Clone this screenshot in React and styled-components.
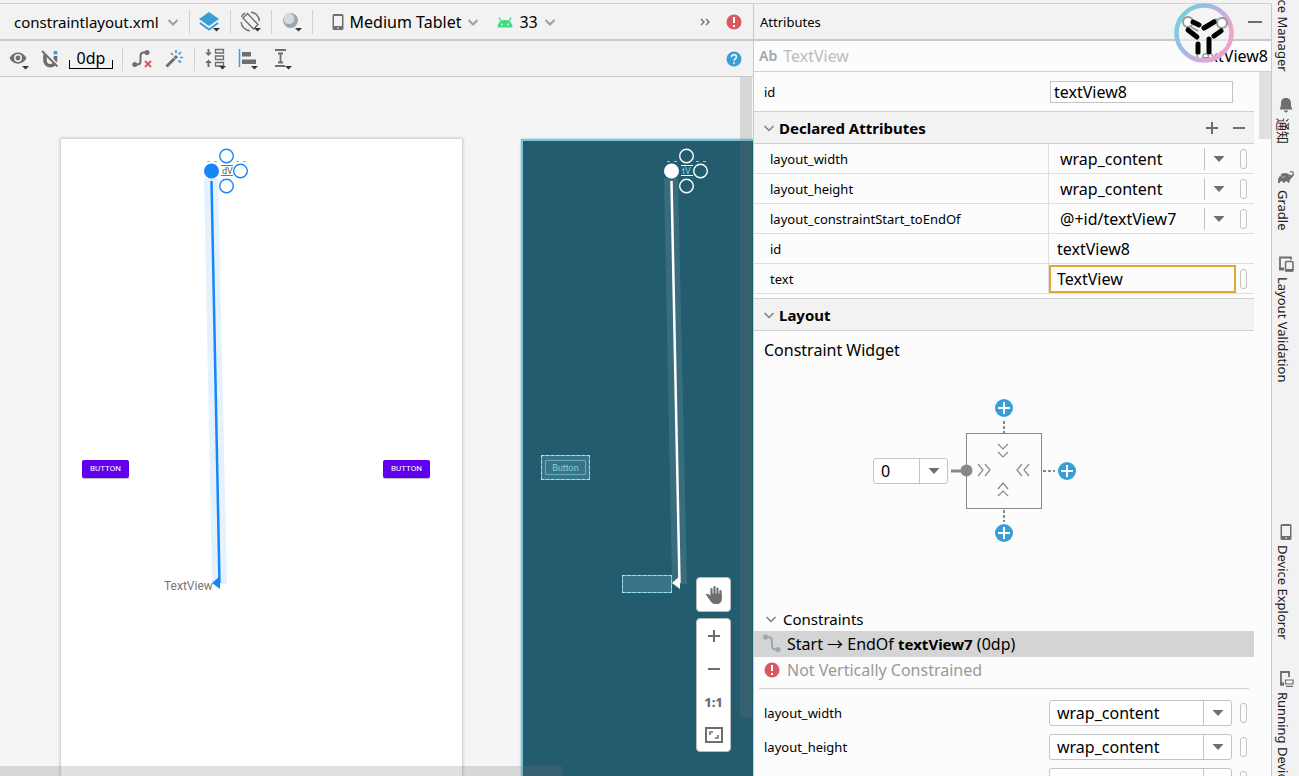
import React, { useState } from 'react';
import styled, { createGlobalStyle, css } from 'styled-components';
import { SiGradle } from 'react-icons/si';

const GlobalStyle = createGlobalStyle`
    * {
        box-sizing: border-box;
    }
    body {
        margin: 0;
        overflow: hidden;
        color: #000;
        background: #f2f2f2;
        font-family: "Noto Sans", "Noto Sans CJK SC", sans-serif;
        font-size: 16px;
        line-height: 20px;
    }
    button, input, select {
        font: inherit;
        color: inherit;
        margin: 0;
        padding: 0;
        border: none;
        outline: none;
        background: none;
        border-radius: 0;
    }
    svg {
        display: block;
        flex: none;
    }
`

const Window = styled.div`
    height: 100vh;
    display: flex;
    flex-direction: column;
    overflow: hidden;
`

const TopEdge = styled.div`
    height: 4px;
    flex: none;
    margin-right: 27px;
    border-bottom: 1px solid #d1d1d1;
`

const Workspace = styled.div`
    flex: 1;
    min-height: 0;
    display: flex;
`

const Editor = styled.main`
    flex: 1;
    min-width: 0;
    display: flex;
    flex-direction: column;
`

const Toolbar = styled.div`
    height: 37px;
    flex: none;
    display: flex;
    align-items: center;
    padding: 0 11px 0 14px;
    border-bottom: 2px solid #c9c9c9;
`

const SurfaceToolbar = styled(Toolbar)`
    height: 36px;
    padding-left: 8px;
    border-bottom-width: 1px;
`

const Divider = styled.span`
    width: 1px;
    height: 24px;
    flex: none;
    background: #d1d1d1;
    margin: 0 9px;
`

const ToolButton = styled.button`
    display: flex;
    align-items: center;
    gap: 6px;
    white-space: nowrap;
    margin-right: ${props => props.$gap || 0}px;
`

const FileButton = styled(ToolButton)`
    gap: 8px;
    font-size: 15px;
`

const DeviceButton = styled(ToolButton)`
    margin-left: 10px;
`

const Spacer = styled.div`
    flex: 1;
`

const MarginValue = styled.span`
    width: 44px;
    height: 20px;
    display: flex;
    justify-content: center;
    line-height: 18px;
    position: relative;

    &::after {
        content: "";
        position: absolute;
        left: 0;
        right: 0;
        bottom: 0;
        height: 8px;
        border: 1px solid #000;
        border-top: none;
    }
`

const Canvas = styled.div`
    flex: 1;
    min-height: 0;
    position: relative;
    overflow: hidden;
    background: #f5f5f5;
`

const Artboard = styled.section`
    position: absolute;
    top: 62px;
    bottom: 0;
    left: ${props => props.$left}px;
    width: 401px;
    ${props => props.$blueprint ? css`
        background: #235c6f;
        border: 2px solid #7cc4d8;
        border-bottom: none;
        box-shadow: 0 0 2px #7cc4d8;
    ` : css`
        background: #fff;
        box-shadow: 0 0 3px 1px #c4c4c4;
    `}
`

const Constraint = styled.svg`
    position: absolute;
    left: ${props => props.$inset}px;
    top: ${props => props.$inset}px;
`

const MaterialButton = styled.button`
    position: absolute;
    top: 321px;
    left: ${props => props.$left}px;
    width: 47px;
    height: 18px;
    border-radius: 2px;
    background: #6200ee;
    color: #fff;
    font: 8px/18px Roboto, sans-serif;
    box-shadow: 0 1px 1px #bbb;
`

const TextViewLabel = styled.span`
    position: absolute;
    left: 103px;
    top: 440px;
    color: #757575;
    font: 12px/15px Roboto, sans-serif;
`

const BlueprintBox = styled.div`
    position: absolute;
    left: ${props => props.$left}px;
    top: ${props => props.$top}px;
    width: ${props => props.$width}px;
    height: ${props => props.$height}px;
    padding: 4px 3px;
    border: 1px solid #6fb9cb;
    outline: 1px dashed #a0e6f5;
    outline-offset: -1px;
    background: #3a7488;
`

const BlueprintButton = styled.button`
    display: block;
    width: 100%;
    height: 100%;
    border: 1px solid #67adbf;
    border-radius: 1px;
    color: #86cfe0;
    font: 9px/14px Roboto, sans-serif;
`

const ScrollThumb = styled.div`
    position: absolute;
    background: rgba(115, 115, 115, 0.22);
    ${props => props.$horizontal
        ? 'left: 0; bottom: 0; width: 562px; height: 10px;'
        : 'right: 1px; top: 0; width: 12px; height: 641px;'}
`

const ZoomControls = styled.div`
    position: absolute;
    right: 22px;
    bottom: 24px;
    display: flex;
    flex-direction: column;
    gap: 6px;
`

const ControlGroup = styled.div`
    width: 35px;
    display: flex;
    flex-direction: column;
    border: 1px solid #bcbcbc;
    border-radius: 4px;
    background: #fff;
`

const ControlButton = styled.button`
    height: 33px;
    display: flex;
    align-items: center;
    justify-content: center;
    color: #6e6e6e;
    font-size: 13px;
    font-weight: 800;
`

const Attributes = styled.aside`
    width: 519px;
    flex: none;
    display: flex;
    flex-direction: column;
    background: #fcfcfc;
    border-left: 1px solid #c9c9c9;
    border-right: 1px solid #c9c9c9;
    position: relative;
`

const PanelHeader = styled.header`
    height: 37px;
    flex: none;
    display: flex;
    align-items: center;
    justify-content: space-between;
    padding: 0 8px 0 6px;
    font-size: 13px;
    background: #f2f2f2;
    border-bottom: 2px solid #c9c9c9;
`

const ComponentRow = styled.div`
    height: 31px;
    flex: none;
    display: flex;
    align-items: center;
    gap: 6px;
    padding: 0 3px 0 5px;
    border-bottom: 1px solid #d1d1d1;
    color: #bdbdbd;
`

const TypeBadge = styled.b`
    color: #9aa7b0;
    font-weight: 600;
    font-size: 14px;
`

const SelectedId = styled.span`
    margin-left: auto;
    color: #000;
`

const RecorderBadge = styled.svg`
    position: absolute;
    top: -1px;
    right: 37px;
`

const PanelBody = styled.div`
    flex: 1;
    min-height: 0;
    display: flex;
    justify-content: space-between;
    overflow: hidden;
`

const PanelContent = styled.div`
    flex: 1;
    margin-right: 5px;
`

const PanelScroll = styled.div`
    width: 12px;
    height: 67px;
    background: #e0e0e0;
`

const Field = styled.div`
    height: ${props => props.$height}px;
    display: flex;
    align-items: center;
    gap: 8px;
    padding: 0 7px 0 10px;
`

const FieldLabel = styled.label`
    flex: 1;
    font-size: 13px;
`

const IdInput = styled.input`
    width: 183px;
    height: 22px;
    margin-right: 14px;
    padding: 0 3px;
    border: 1px solid #c4c4c4;
    background: #fff;
`

const SectionHeader = styled.div`
    height: 33px;
    display: flex;
    align-items: center;
    gap: 4px;
    padding: 0 8px 0 9px;
    background: #f2f2f2;
    border-top: 1px solid #d1d1d1;
    border-bottom: 1px solid #d1d1d1;
`

const SectionTitle = styled.h2`
    flex: 1;
    margin: 0;
    font-size: 15px;
    font-weight: 700;
`

const IconButton = styled.button`
    display: flex;
    margin-left: 9px;
`

const PropertyTable = styled.table`
    width: 100%;
    margin-bottom: 4px;
    table-layout: fixed;
    border-collapse: separate;
    border-spacing: 0;
`

const NameCell = styled.th`
    height: 30px;
    padding: 0 16px;
    border-right: 1px solid #dedede;
    border-bottom: 1px solid #dedede;
    font-size: 13px;
    font-weight: 400;
    text-align: left;
`

const ValueCell = styled.td`
    width: 205px;
    padding: 0;
    border-bottom: 1px solid #dedede;
`

const ValueRow = styled.div`
    height: 29px;
    display: flex;
    align-items: center;
    justify-content: space-between;
    padding-right: 7px;
`

const Combo = styled.span`
    display: flex;
    align-items: stretch;
    width: ${props => props.$width || 183}px;
    height: ${props => props.$boxed ? 26 : 22}px;
    ${props => props.$boxed && css`
        border: 1px solid #c4c4c4;
        border-radius: 3px;
        background: #fff;
    `}
`

const ComboSelect = styled.select`
    flex: 1;
    min-width: 0;
    appearance: none;
    padding-left: ${props => props.$pad}px;
`

const ComboArrow = styled.span`
    width: 28px;
    display: flex;
    align-items: center;
    justify-content: center;
    border-left: 1px solid #c4c4c4;
`

const ValueInput = styled.input`
    width: ${props => props.$active ? 187 : 183}px;
    height: 28px;
    padding: 0 ${props => props.$active ? 6 : 8}px;
    ${props => props.$active && 'border: 2px solid #e2a53a;'}
`

const Pill = styled.button`
    width: 7px;
    height: 20px;
    border: 1px solid #c4c4c4;
    border-radius: 3px;
`

const WidgetTitle = styled.div`
    padding: 9px 10px 0;
`

const ConstraintWidget = styled.div`
    display: flex;
    align-items: center;
    gap: 2px;
    height: 146px;
    margin: 38px 0 63px 119px;
`

const ConstraintsTitle = styled.div`
    height: 24px;
    display: flex;
    align-items: center;
    gap: 6px;
    padding-left: 11px;
    font-size: 15px;
`

const ConstraintRow = styled.div`
    height: 26px;
    display: flex;
    align-items: center;
    gap: 6px;
    padding-left: 9px;
    white-space: pre;
    color: ${props => props.$selected ? '#000' : '#999'};
    background: ${props => props.$selected ? '#d4d4d4' : 'none'};

    b {
        font-size: 15px;
    }
`

const IconSlot = styled.span`
    width: 18px;
    display: flex;
    justify-content: center;
`

const Rule = styled.hr`
    height: 1px;
    margin: 5px 5px 7px;
    border: none;
    background: #d1d1d1;
`

const Stripe = styled.nav`
    width: 27px;
    flex: none;
    display: flex;
    flex-direction: column;
    justify-content: space-between;
    overflow: hidden;
    margin-top: -4px;
`

const StripeGroup = styled.div`
    display: flex;
    flex-direction: column;
    flex: none;
    height: ${props => props.$height || 'auto'};
    gap: ${props => props.$gap}px;
`

const StripeClip = styled.div`
    height: 72px;
    display: flex;
    flex-direction: column;
    justify-content: flex-end;
    overflow: hidden;
`

const StripeButton = styled.button`
    flex: none;
    display: flex;
    flex-direction: column;
    align-items: center;
    gap: 5px;
    font-size: 13px;
    line-height: 20px;
    color: #222;
`

const StripeLabel = styled.span`
    margin-right: 5px;
    writing-mode: vertical-rl;
    text-orientation: sideways;
    white-space: nowrap;
`

const Chevron = ({ color = '#9aa1a6', weight = 2 }) => (
    <svg width="12" height="12" viewBox="0 0 12 12" fill="none" stroke={color} strokeWidth={weight}>
        <path d="M1.500 4l4.500 4.500L10.500 4" />
    </svg>
)

const LayersIcon = () => (
    <svg width="22" height="22" viewBox="0 0 22 22">
        <path d="M10 1l10 7-10 7L0 8z" fill="#389fd6" />
        <path d="M1 12l9 6.500 9-6.500" fill="none" stroke="#389fd6" strokeWidth="2" />
        <path d="M14 17h7l-3.500 3.500z" fill="#333" />
    </svg>
)

const RotateIcon = () => (
    <svg width="22" height="22" viewBox="0 0 22 22" fill="none" stroke="#6e6e6e" strokeWidth="1.400">
        <path d="M7.500 2.500L3 7l10.500 11 4.500-4.500z" />
        <path d="M11 1.200a9 9 0 0 1 8.300 9M1.200 11a9 9 0 0 0 8.800 8.700" />
        <path d="M5 1.800A9 9 0 0 0 1.500 6" />
        <path d="M14 17h7l-3.500 3.500z" fill="#333" stroke="none" />
    </svg>
)

const NightIcon = () => (
    <svg width="22" height="22" viewBox="0 0 22 22">
        <circle cx="9.500" cy="9.500" r="7.500" fill="#9aa7b0" />
        <circle cx="8" cy="7.500" r="5.500" fill="#d3d9dd" />
        <path d="M10 3c3 1 4 3 3.500 6-.5 3-3 5-7 5 5 2 10-1 10-6 0-3-3-5-6.500-5z" fill="#9aa7b0" />
        <path d="M14 17h7l-3.500 3.500z" fill="#333" />
    </svg>
)

const DeviceIcon = () => (
    <svg width="12" height="16" viewBox="0 0 12 16">
        <path d="M2 0h8a1.500 1.500 0 0 1 1.500 1.500v13A1.500 1.500 0 0 1 10 16H2a1.500 1.500 0 0 1-1.500-1.500v-13A1.500 1.500 0 0 1 2 0zm0 2v10h8V2zm3 11.500v1h2v-1z" fill="#6e6e6e" fillRule="evenodd" />
    </svg>
)

const AndroidIcon = () => (
    <svg width="16" height="12" viewBox="0 0 16 12">
        <path d="M0.500 11.500C0.500 6.500 4 4 8 4s7.500 2.500 7.500 7.500z" fill="#3ddc84" />
        <path d="M4.500 6L2 1.500M11.500 6L14 1.500" stroke="#3ddc84" strokeWidth="1.300" />
        <circle cx="4.800" cy="8.500" r="0.900" fill="#f2f2f2" />
        <circle cx="11.200" cy="8.500" r="0.900" fill="#f2f2f2" />
    </svg>
)

const MoreIcon = () => (
    <svg width="10" height="8" viewBox="0 0 10 8" fill="none" stroke="#6e6e6e" strokeWidth="1.300">
        <path d="M1 1l3 3-3 3M6 1l3 3-3 3" />
    </svg>
)

const ErrorIcon = () => (
    <svg width="16" height="16" viewBox="0 0 16 16">
        <circle cx="8" cy="8" r="7.500" fill="#db5860" />
        <path d="M7 3h2v6H7zM7 11h2v2H7z" fill="#fff" />
    </svg>
)

const HelpIcon = () => (
    <svg width="16" height="16" viewBox="0 0 16 16">
        <circle cx="8" cy="8" r="7.500" fill="#389fd6" />
        <path d="M5.500 6.200C5.500 4.600 6.500 3.800 8 3.800s2.500.8 2.500 2.200C10.500 7.500 8 7.700 8 9.800" fill="none" stroke="#fff" strokeWidth="1.500" />
        <path d="M7.200 11.200h1.600v1.600H7.200z" fill="#fff" />
    </svg>
)

const EyeIcon = () => (
    <svg width="22" height="22" viewBox="0 0 22 22">
        <path d="M1.500 10C5 2.500 15 2.500 18.500 10 15 17.500 5 17.500 1.500 10z" fill="#6e6e6e" />
        <circle cx="10" cy="10" r="3.200" fill="none" stroke="#f2f2f2" strokeWidth="1.500" />
        <path d="M14 18h7l-3.500 3.500z" fill="#333" />
    </svg>
)

const MagnetIcon = () => (
    <svg width="18" height="18" viewBox="0 0 18 18">
        <path d="M4 4.500v6a5.200 5.200 0 0 0 10.500 0V6" fill="none" stroke="#6e6e6e" strokeWidth="3.600" />
        <path d="M12.700 1h3.600v3.500h-3.600z" fill="#389fd6" />
        <path d="M2.500 0.500l15 15" stroke="#f2f2f2" strokeWidth="2" />
        <path d="M1 1l15.500 15.500" stroke="#6e6e6e" strokeWidth="1.800" />
    </svg>
)

const ClearIcon = () => (
    <svg width="20" height="20" viewBox="0 0 20 20" fill="none">
        <path d="M3 15.500h2.500c2.500 0 3-1.500 3-3.500V7c0-2 .5-3.500 3-3.500H15" stroke="#6e6e6e" strokeWidth="2" />
        <circle cx="2.800" cy="15.500" r="2.500" fill="#6e6e6e" />
        <circle cx="15" cy="3.500" r="2.500" fill="#6e6e6e" />
        <path d="M13 12l6 6M19 12l-6 6" stroke="#db5860" strokeWidth="2" />
    </svg>
)

const WandIcon = () => (
    <svg width="18" height="18" viewBox="0 0 18 18">
        <path d="M1.500 16.500L12 6" stroke="#6e6e6e" strokeWidth="3" />
        <path d="M8.500 7.500l2 2" stroke="#f2f2f2" />
        <path d="M6 3l2 2M11 0v3M16 2l-2.500 2.500M15 7.500h3M13.500 10.500l2.500 2" stroke="#389fd6" strokeWidth="1.700" />
    </svg>
)

const PackIcon = () => (
    <svg width="22" height="22" viewBox="0 0 22 22">
        <path d="M4.500 1v5M4.500 19v-6" stroke="#6e6e6e" strokeWidth="2" />
        <path d="M1 4.500h7L4.500 8zM1 15h7l-3.500-3.500z" fill="#6e6e6e" />
        <path d="M11.500 1.500h8v3.500h-8zM11.500 8h8v3.500h-8zM11.500 14.500h8v3.500h-8z" fill="none" stroke="#6e6e6e" strokeWidth="1.300" />
        <path d="M15 18h7l-3.500 3.500z" fill="#333" />
    </svg>
)

const AlignIcon = () => (
    <svg width="21" height="22" viewBox="0 0 21 22">
        <path d="M1.500 1v18" stroke="#389fd6" strokeWidth="1.500" />
        <path d="M4 4h9v4.500H4zM4 11.500h14V16H4z" fill="#6e6e6e" />
        <path d="M13 18h7l-3.500 3.500z" fill="#333" />
    </svg>
)

const GuidelineIcon = () => (
    <svg width="21" height="22" viewBox="0 0 21 22">
        <path d="M3 2h11M3 18h10M8.500 5v10M6 5.500h5M6 14.500h5" stroke="#6e6e6e" strokeWidth="1.800" />
        <path d="M13 18h7l-3.500 3.500z" fill="#333" />
    </svg>
)

const HandIcon = () => (
    <svg width="20" height="20" viewBox="0 0 20 20" stroke="#6e6e6e" strokeLinecap="round">
        <path d="M7.500 10V4M10.500 10V2M13.500 10V3.500M16.500 11V6" strokeWidth="2.100" />
        <path d="M2.500 9.500C4 8.500 5 10 7 12V9h10.300v5c0 3-1.500 4.500-4 4.500H11c-3 0-4-2-8.500-9z" fill="#6e6e6e" />
    </svg>
)

const PlusIcon = () => (
    <svg width="14" height="14" viewBox="0 0 14 14" stroke="#6e6e6e" strokeWidth="2">
        <path d="M7 1v12M1 7h12" />
    </svg>
)

const MinusIcon = ({ width = 14 }) => (
    <svg width={width} height="14" viewBox={`0 0 ${width} 14`} stroke="#6e6e6e" strokeWidth="2">
        <path d={`M1 7h${width - 2}`} />
    </svg>
)

const FitIcon = () => (
    <svg width="18" height="16" viewBox="0 0 18 16" fill="none" stroke="#6e6e6e">
        <path d="M1 1h16v14H1z" strokeWidth="2" />
        <path d="M5 8V5h3M13 8v3h-3" strokeWidth="1.500" />
    </svg>
)

const Triangle = () => (
    <svg width="12" height="8" viewBox="0 0 12 8">
        <path d="M0.500 1h11L6 7z" fill="#6e6e6e" />
    </svg>
)

const LinkIcon = () => (
    <svg width="18" height="20" viewBox="0 0 18 20" fill="none">
        <path d="M3 3h2c3 0 4 1.500 4 4v4.500c0 2.500 1 4 4 4h2" stroke="#9aa7b0" strokeWidth="2" />
        <circle cx="2.500" cy="3" r="2.500" fill="#9aa7b0" />
        <circle cx="15" cy="15.500" r="2.500" fill="#9aa7b0" />
    </svg>
)

const BellIcon = () => (
    <svg width="16" height="16" viewBox="0 0 16 16" fill="#6e6e6e">
        <path d="M8 1c4 0 5 2.500 5 5.500 0 3 .5 4 1.500 6h-13c1-2 1.500-3 1.500-6C3 3.500 4 1 8 1zM6 13.500h4c0 2.500-4 2.500-4 0z" />
    </svg>
)

const ValidationIcon = () => (
    <svg width="16" height="16" viewBox="0 0 16 16" fill="none" stroke="#6e6e6e">
        <path d="M13 3.500V1.500H2V13h4" strokeWidth="1.800" />
        <path d="M1 11.500h5v3H1z" fill="#6e6e6e" stroke="none" />
        <rect x="7.500" y="5.500" width="7.500" height="9.500" rx="1" strokeWidth="1.500" />
        <path d="M7 13h8.500v2.500H7z" fill="#6e6e6e" stroke="none" />
    </svg>
)

const RunningIcon = () => (
    <svg width="16" height="16" viewBox="0 0 16 16" fill="none" stroke="#6e6e6e">
        <path d="M11 6V1H3v12.500h3" strokeWidth="1.800" />
        <path d="M2 11.500h4v3H2z" fill="#6e6e6e" stroke="none" />
        <path d="M7.500 9h7.500v4H7.500zM8 15.300h7" strokeWidth="1.200" />
    </svg>
)

const ConstraintDrawing = ({ color, halo, handle, label, labelColor, inset = 0 }) => (
    <Constraint $inset={-inset} width="200" height="460" viewBox="0 0 200 460" fill="none">
        <path d="M143 39h14l9 406h-15z" fill={halo} />
        <path d="M150.500 42l8 402" stroke={color} strokeWidth="2.500" />
        <path d="M151 444l8-7v13z" fill={color} />
        <path d="M146 22.500h3M153 22.500h3M175 22.500h3M182 22.500h3" stroke={color} strokeOpacity="0.600" />
        <path d="M160 26.500h12M160 36.500h12" stroke={color} />
        <circle cx="150.500" cy="32" r="7.500" fill={color} />
        <g fill={handle} stroke={color} strokeWidth="1.400">
            <circle cx="165.500" cy="17" r="6.800" />
            <circle cx="179.500" cy="32" r="6.800" />
            <circle cx="165.500" cy="47" r="6.800" />
        </g>
        <text x="161" y="35" fontFamily="Roboto, sans-serif" fontSize="9" fill={labelColor}>{label}</text>
    </Constraint>
)

const AddAnchor = ({ x, y }) => (
    <g>
        <circle cx={x} cy={y} r="9" fill="#389fd6" />
        <path d={`M${x - 6} ${y}h12M${x} ${y - 6}v12`} stroke="#fff" strokeWidth="2" />
    </g>
)

const WidgetDrawing = () => (
    <svg width="127" height="146" viewBox="0 0 127 146" fill="none" stroke="#888">
        <rect x="16.500" y="35.500" width="75" height="75" />
        <path d="M1 73h12" strokeWidth="3" />
        <circle cx="16.500" cy="72.500" r="6" fill="#888" stroke="none" />
        <path d="M54 23v12M54 112v12M93 73h12" strokeWidth="2" strokeDasharray="3 2" />
        <path d="M28 66l5 6-5 6M35 66l5 6-5 6M72 66l-5 6 5 6M79 66l-5 6 5 6" strokeWidth="1.200" />
        <path d="M48 46l5 5 5-5M48 54l5 5 5-5M48 91l5-6 5 6M48 98l5-5 5 5" strokeWidth="1.200" />
        <g stroke="none">
            <AddAnchor x={54} y={10} />
            <AddAnchor x={54} y={135} />
            <AddAnchor x={117} y={73} />
        </g>
    </svg>
)

const RecorderLogo = () => (
    <RecorderBadge width="60" height="60" viewBox="0 0 60 60" fill="none">
        <defs>
            <linearGradient id="ring" x1="0" y1="0.200" x2="1" y2="0.800">
                <stop offset="0.100" stopColor="#7accdf" />
                <stop offset="0.500" stopColor="#b7b0e8" />
                <stop offset="0.850" stopColor="#eda5cd" />
            </linearGradient>
        </defs>
        <circle cx="30" cy="30" r="27.500" fill="#f5f5f5" fillOpacity="0.600" stroke="url(#ring)" strokeWidth="4.500" />
        <g stroke="#999" strokeWidth="2">
            <circle cx="14" cy="19" r="5" fill="#fff" />
            <circle cx="48" cy="20" r="5" fill="#fff" />
            <path d="M17 24l7 4M43 16l-4 2" />
        </g>
        <g stroke="#000" strokeWidth="5" strokeLinecap="round">
            <path d="M19 19l6 3M30 25l10-6M14 27l9 7M40 33l7-5M24 41v8M35 36v13" />
        </g>
    </RecorderBadge>
)

const declared = [
    { name: 'layout_width', value: 'wrap_content', type: 'combo' },
    { name: 'layout_height', value: 'wrap_content', type: 'combo' },
    { name: 'layout_constraintStart_toEndOf', value: '@+id/textView7', type: 'combo' },
    { name: 'id', value: 'textView8', type: 'input' },
    { name: 'text', value: 'TextView', type: 'input', active: true },
]

const layoutFields = [
    { id: 'width', name: 'layout_width', value: 'wrap_content' },
    { id: 'height', name: 'layout_height', value: 'wrap_content' },
    { id: 'extra', name: '', value: '' },
]

const ComboBox = ({ id, value, boxed, width, pad }) => (
    <Combo $boxed={boxed} $width={width}>
        <ComboSelect id={id} $pad={pad} defaultValue={value} aria-label={id}>
            <option value={value}>{value}</option>
        </ComboSelect>
        <ComboArrow><Triangle /></ComboArrow>
    </Combo>
)

const EditorToolbar = () => (
    <>
        <Toolbar>
            <FileButton $gap={1}>constraintlayout.xml <Chevron /></FileButton>
            <Divider />
            <ToolButton aria-label="Design surface"><LayersIcon /></ToolButton>
            <Divider />
            <ToolButton aria-label="Orientation"><RotateIcon /></ToolButton>
            <Divider />
            <ToolButton aria-label="Night mode"><NightIcon /></ToolButton>
            <Divider />
            <DeviceButton $gap={18}><DeviceIcon /> Medium Tablet <Chevron /></DeviceButton>
            <ToolButton><AndroidIcon /> 33 <Chevron /></ToolButton>
            <Spacer />
            <ToolButton $gap={16} aria-label="More"><MoreIcon /></ToolButton>
            <ToolButton aria-label="Errors"><ErrorIcon /></ToolButton>
        </Toolbar>
        <SurfaceToolbar>
            <ToolButton $gap={11} aria-label="View options"><EyeIcon /></ToolButton>
            <ToolButton $gap={10} aria-label="Autoconnect"><MagnetIcon /></ToolButton>
            <ToolButton aria-label="Default margins"><MarginValue>0dp</MarginValue></ToolButton>
            <Divider />
            <ToolButton $gap={13} aria-label="Clear constraints"><ClearIcon /></ToolButton>
            <ToolButton $gap={2} aria-label="Infer constraints"><WandIcon /></ToolButton>
            <Divider />
            <ToolButton $gap={12} aria-label="Pack"><PackIcon /></ToolButton>
            <ToolButton $gap={13} aria-label="Align"><AlignIcon /></ToolButton>
            <ToolButton aria-label="Guidelines"><GuidelineIcon /></ToolButton>
            <Spacer />
            <ToolButton aria-label="Help"><HelpIcon /></ToolButton>
        </SurfaceToolbar>
    </>
)

const DesignSurface = () => (
    <Canvas>
        <Artboard $left={61}>
            <MaterialButton $left={21}>BUTTON</MaterialButton>
            <MaterialButton $left={322}>BUTTON</MaterialButton>
            <TextViewLabel>TextView</TextViewLabel>
            <ConstraintDrawing color="#1886f7" halo="#e5f2fe" handle="#fff" label="dV" labelColor="#555" />
        </Artboard>
        <Artboard $left={521} $blueprint>
            <BlueprintBox $left={18} $top={314} $width={49} $height={25}>
                <BlueprintButton>Button</BlueprintButton>
            </BlueprintBox>
            <BlueprintBox $left={99} $top={434} $width={50} $height={18} />
            <ConstraintDrawing color="#fff" halo="#396d7e" handle="#235c6f" label="tV" labelColor="#86cfe0" inset={2} />
        </Artboard>
        <ScrollThumb />
        <ScrollThumb $horizontal />
        <ZoomControls>
            <ControlGroup>
                <ControlButton aria-label="Pan"><HandIcon /></ControlButton>
            </ControlGroup>
            <ControlGroup>
                <ControlButton aria-label="Zoom in"><PlusIcon /></ControlButton>
                <ControlButton aria-label="Zoom out"><MinusIcon /></ControlButton>
                <ControlButton>1:1</ControlButton>
                <ControlButton aria-label="Zoom to fit"><FitIcon /></ControlButton>
            </ControlGroup>
        </ZoomControls>
    </Canvas>
)

const DeclaredTable = () => (
    <PropertyTable>
        <tbody>
            {declared.map((item) =>
                <tr key={item.name}>
                    <NameCell scope="row">{item.name}</NameCell>
                    <ValueCell>
                        <ValueRow>
                            {item.type === 'combo'
                                ? <ComboBox id={item.name} value={item.value} pad={11} />
                                : <ValueInput aria-label={item.name} defaultValue={item.value} $active={item.active} />}
                            {item.name !== 'id' && <Pill aria-label="Pick a resource" />}
                        </ValueRow>
                    </ValueCell>
                </tr>
            )}
        </tbody>
    </PropertyTable>
)

const AttributesPanel = () => {
    const [id, setId] = useState('textView8');
    return (
        <Attributes>
            <PanelHeader>
                Attributes
                <IconButton aria-label="Hide"><MinusIcon width={16} /></IconButton>
            </PanelHeader>
            <ComponentRow>
                <TypeBadge>Ab</TypeBadge>
                TextView
                <SelectedId>{id}</SelectedId>
            </ComponentRow>
            <RecorderLogo />
            <PanelBody>
                <PanelContent>
                    <Field $height={39}>
                        <FieldLabel htmlFor="view-id">id</FieldLabel>
                        <IdInput id="view-id" value={id} onChange={(e) => setId(e.target.value)} />
                    </Field>
                    <SectionHeader>
                        <Chevron color="#7f7f7f" weight={1.500} />
                        <SectionTitle>Declared Attributes</SectionTitle>
                        <IconButton aria-label="Add attribute"><PlusIcon /></IconButton>
                        <IconButton aria-label="Remove attribute"><MinusIcon /></IconButton>
                    </SectionHeader>
                    <DeclaredTable />
                    <SectionHeader>
                        <Chevron color="#7f7f7f" weight={1.500} />
                        <SectionTitle>Layout</SectionTitle>
                    </SectionHeader>
                    <WidgetTitle>Constraint Widget</WidgetTitle>
                    <ConstraintWidget>
                        <ComboBox id="start-margin" value="0" boxed width={75} pad={7} />
                        <WidgetDrawing />
                    </ConstraintWidget>
                    <ConstraintsTitle><Chevron color="#7f7f7f" weight={1.500} /> Constraints</ConstraintsTitle>
                    <ConstraintRow $selected>
                        <LinkIcon />
                        <span>Start → EndOf <b>textView7</b> (0dp)</span>
                    </ConstraintRow>
                    <ConstraintRow>
                        <IconSlot><ErrorIcon /></IconSlot>
                        Not Vertically Constrained
                    </ConstraintRow>
                    <Rule />
                    {layoutFields.map((item) =>
                        <Field $height={34} key={item.id}>
                            <FieldLabel htmlFor={`layout-${item.id}`}>{item.name}</FieldLabel>
                            <ComboBox id={`layout-${item.id}`} value={item.value} boxed pad={7} />
                            <Pill aria-label="Pick a resource" />
                        </Field>
                    )}
                </PanelContent>
                <PanelScroll />
            </PanelBody>
        </Attributes>
    )
}

const ToolStripe = () => (
    <Stripe>
        <StripeGroup $gap={25}>
            <StripeClip>
                <StripeButton><StripeLabel>Device Manager</StripeLabel></StripeButton>
            </StripeClip>
            <StripeButton><BellIcon /><StripeLabel>通知</StripeLabel></StripeButton>
            <StripeButton><SiGradle size={16} color="#6e6e6e" /><StripeLabel>Gradle</StripeLabel></StripeButton>
            <StripeButton><ValidationIcon /><StripeLabel>Layout Validation</StripeLabel></StripeButton>
        </StripeGroup>
        <StripeGroup $gap={31} $height="252px">
            <StripeButton><DeviceIcon /><StripeLabel>Device Explorer</StripeLabel></StripeButton>
            <StripeButton><RunningIcon /><StripeLabel>Running Devices</StripeLabel></StripeButton>
        </StripeGroup>
    </Stripe>
)

export default function App() {
    return (
        <>
            <GlobalStyle />
            <Window>
                <TopEdge />
                <Workspace>
                    <Editor>
                        <EditorToolbar />
                        <DesignSurface />
                    </Editor>
                    <AttributesPanel />
                    <ToolStripe />
                </Workspace>
            </Window>
        </>
    )
}
